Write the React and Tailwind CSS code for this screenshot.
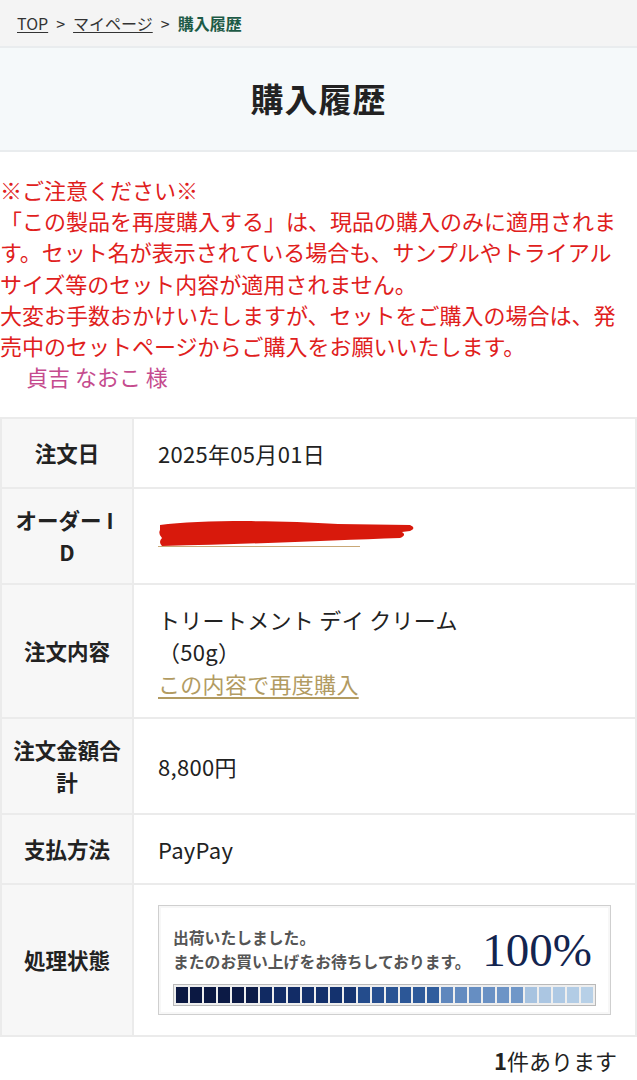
const segments = [
  "#0b1842", "#0b1842", "#0b1842", "#0c1a45", "#0c1a45", "#0d1c48",
  "#112a62", "#122c66", "#122c66", "#13306b", "#13306b", "#14326e", "#163571",
  "#244c8c", "#274f90", "#2a5494", "#2c5797", "#2e5a9a", "#305d9d",
  "#5f87bd", "#638bc0", "#668ec2", "#6a91c4", "#6d94c6", "#7097c8",
  "#a7c3e0", "#abc6e2", "#aec9e4", "#b2cce5", "#b7d0e7",
];

const Row = ({ label, children, valueClass = "py-[18px]" }) => (
  <tr>
    <th className="w-[132px] border-2 border-[#ebebeb] bg-[#f7f7f7] px-[8px] py-[15px] text-center align-middle text-[21.5px] font-bold leading-[32px] text-[#222]">
      {label}
    </th>
    <td className={`border-2 border-[#ebebeb] bg-white px-6 align-middle text-[22px] leading-[32px] tracking-[0.3px] text-[#222] ${valueClass}`}>
      {children}
    </td>
  </tr>
);

const Redacted = () => (
  <svg width="262" height="32" viewBox="0 0 262 32" className="inline-block align-top">
    <line x1="0" y1="26.5" x2="202" y2="26.5" stroke="#c9a877" strokeWidth="1.2" />
    <path
      d="M2,5 C40,0 120,0 180,4 L252,5 Q259,8 252,11 L244,12 Q249,15 242,18 C180,20 100,24 4,26 Q0,22 4,18 Q0,14 2,10 Z"
      fill="#d8190c"
    />
  </svg>
);

export default function App() {
  return (
    <div className="w-[637px] bg-white font-['Noto_Sans_CJK_JP',sans-serif] text-[#222]">
      <nav className="flex h-[46px] items-center gap-[8px] bg-[#f4f4f4] pl-[17px] text-[16px] text-[#333]">
        <span className="underline underline-offset-2">TOP</span>
        <span>&gt;</span>
        <span className="underline underline-offset-2">マイページ</span>
        <span>&gt;</span>
        <span className="font-bold text-[#1d5a46]">購入履歴</span>
      </nav>
      <header className="flex h-[106px] items-center justify-center border-y-2 border-[#e9ecee] bg-[#f5f9fa]">
        <h1 className="text-[33px] font-bold tracking-[1px] text-[#222]">購入履歴</h1>
      </header>

      <section className="pt-[22px] text-[22px] leading-[31.2px]">
        <p className="text-[#e0201c]">
          ※ご注意ください※
          <br />
          「この製品を再度購入する」は、現品の購入のみに適用されま
          <br />
          す。セット名が表示されている場合も、サンプルやトライアル
          <br />
          サイズ等のセット内容が適用されません。
          <br />
          大変お手数おかけいたしますが、セットをご購入の場合は、発
          <br />
          売中のセットページからご購入をお願いいたします。
        </p>
        <p className="pl-[26px] text-[#c54b8e]">貞吉 なおこ 様</p>
      </section>

      <table className="mt-[25px] w-full border-collapse">
        <tbody>
          <Row label="注文日">2025年05月01日</Row>
          <Row label={<>オーダー<span className="px-[5px] font-semibold">I</span><br />D</>}>
            <Redacted />
          </Row>
          <Row label="注文内容">
            トリートメント デイ クリーム
            <br />
            （50g）
            <br />
            <a className="text-[#b29b62] underline underline-offset-4">この内容で再度購入</a>
          </Row>
          <Row label={<>注文金額合<br />計</>}>8,800円</Row>
          <Row label="支払方法">PayPay</Row>
          <Row label="処理状態" valueClass="py-[20px]">
            <div className="border border-[#cfcfcf] px-[14px] pb-[8px] pt-[18px] tracking-normal shadow-[inset_0_0_0_2px_#f7f7f7]">
              <div className="flex items-center justify-between pr-[4px]">
                <div className="text-[15.8px] font-bold leading-[24px] text-[#555]">
                  出荷いたしました。
                  <br />
                  またのお買い上げをお待ちしております。
                </div>
                <div className="font-['Liberation_Serif',serif] text-[47px] leading-[52px] text-[#13244f]">
                  100%
                </div>
              </div>
              <div className="mt-[8px] flex h-[22px] gap-[2px] border border-[#b9b9b9] bg-[#eeeeee] p-[2px]">
                {segments.map((c, i) => (
                  <div key={i} className="flex-1" style={{ backgroundColor: c }} />
                ))}
              </div>
            </div>
          </Row>
        </tbody>
      </table>

      <div className="border-b-4 border-[#e6e6e6] pb-[6px] pr-[20px] pt-[8px] text-right text-[22px] leading-[31px] text-[#222]">
        <span className="font-bold">1</span>件あります
      </div>
    </div>
  );
}
